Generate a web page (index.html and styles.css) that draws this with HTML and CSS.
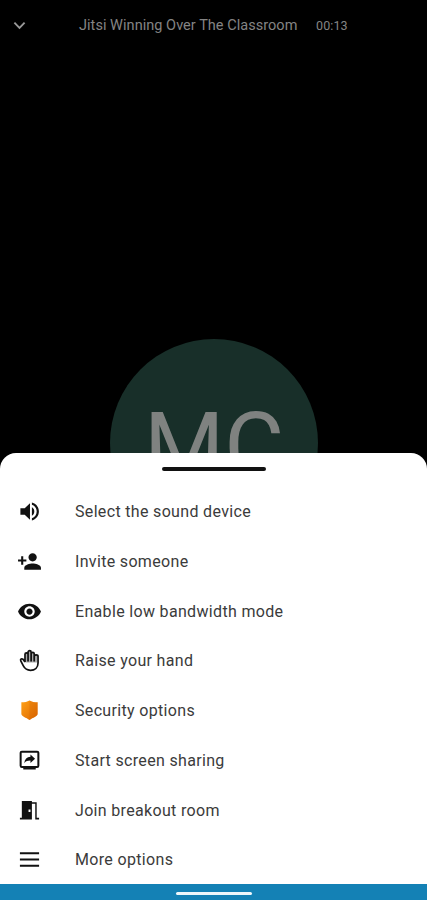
FILE: index.html
```html
<!DOCTYPE html>
<html lang="en">
<head>
<meta charset="utf-8">
<title>Jitsi Meeting</title>
<link rel="stylesheet" href="styles.css">
</head>
<body>
<main class="screen">
  <header class="topbar">
    <svg class="chevron" viewBox="0 0 14 9"><path d="M1.500 1.500 7 7l5.500-5.500"/></svg>
    <span class="title">Jitsi Winning Over The Classroom</span>
    <span class="timer">00:13</span>
  </header>
  <div class="avatar"><span>MC</span></div>
  <section class="sheet">
    <div class="handle"></div>
    <ul class="menu">
      <li><svg class="icon" viewBox="0 0 24 24"><path d="M2.500 8.500v7h4.500l5.500 5V3.500L7 8.500zM14.500 7.500v9c1.700-.8 2.500-2.500 2.500-4.500s-.8-3.700-2.500-4.500zM14.500 2.700v2.200c3 .9 5 3.700 5 7.100s-2 6.200-5 7.100v2.200c4.200-.9 7.300-4.700 7.300-9.300s-3.100-8.400-7.300-9.300z"/></svg><span>Select the sound device</span></li>
      <li><svg class="icon wide" viewBox="0 0 24 24"><path d="M15 12c2.210 0 4-1.790 4-4s-1.790-4-4-4-4 1.790-4 4 1.790 4 4 4zm-9-2V7H4v3H1v2h3v3h2v-3h3v-2H6zm9 4c-2.670 0-8 1.340-8 4v2h16v-2c0-2.660-5.330-4-8-4z"/></svg><span>Invite someone</span></li>
      <li><svg class="icon wide" viewBox="0 0 24 24"><path d="M12 4.500C7 4.500 2.730 7.610 1 12c1.730 4.390 6 7.500 11 7.500s9.270-3.110 11-7.500c-1.730-4.390-6-7.500-11-7.500zM12 17c-2.760 0-5-2.240-5-5s2.240-5 5-5 5 2.240 5 5-2.240 5-5 5zm0-8c-1.660 0-3 1.340-3 3s1.340 3 3 3 3-1.340 3-3-1.340-3-3-3z"/></svg><span>Enable low bandwidth mode</span></li>
      <li><svg class="icon hand" viewBox="0 0 24 24"><path class="fingers" d="M7.500 14V4.500q1.500-1.500 3 0V3q1.500-2 3 0v1.500q1.700-1.500 3 0V7q2-1 3.500.5V14z"/><path class="outline" d="M7.300 13.500V5.500c0-1.800 3.200-1.800 3.200 0V13M10.500 12V3.300c0-2 3.200-2 3.200 0V13M13.700 5c0-1.900 3.200-1.900 3.200 0v8M16.900 7.500c0-1.800 4-1.800 4 0V14.500c0 4.700-3.200 7.700-7.900 7.700-3.500 0-5.900-1.600-7.400-4.500L2.900 12.300c-.8-1.600 1-2.700 2.300-1.600l2.100 2.800"/></svg><span>Raise your hand</span></li>
      <li><svg class="icon" viewBox="0 0 24 24"><defs><linearGradient id="shield" x1="0" y1="0" x2="1" y2="1"><stop offset="0" stop-color="#ffa116"/><stop offset="1" stop-color="#dc6500"/></linearGradient></defs><path fill="url(#shield)" d="M12 1.500c2.300 1.400 5 1.800 8.500 2v12c0 2.800-5 4-8.500 6.500-3.500-2.500-8.500-3.700-8.500-6.500v-12c3.500-.2 6.200-.6 8.500-2z"/><path class="shade" d="M12 1.500c2.300 1.400 5 1.800 8.500 2v12c0 2.800-5 4-8.500 6.500z"/></svg><span>Security options</span></li>
      <li><svg class="icon" viewBox="0 0 24 24"><path fill-rule="evenodd" d="M4 1.700h16a2.300 2.300 0 0 1 2.300 2.300v13.500a2.300 2.300 0 0 1-2.300 2.300h-1.500v1.700h-13v-1.700H4a2.300 2.300 0 0 1-2.300-2.300V4A2.300 2.300 0 0 1 4 1.700zm-.2 2.100v13.900h16.400V3.800z"/><path d="M6.500 14.800c.5-4.200 2.700-6.500 6.500-6.700V5.700l4.800 4.400-4.800 4.500v-2.500c-2.900 0-4.900.7-6.500 2.700z"/></svg><span>Start screen sharing</span></li>
      <li><svg class="icon" viewBox="0 0 24 24"><path fill-rule="evenodd" d="M4 2H14.500v1.300h5v16.200H22v2h-4V5h-3.500v16.500H2v-2h2zm7 9v2.500h2V11z"/></svg><span>Join breakout room</span></li>
      <li><svg class="icon" viewBox="0 0 24 24"><path d="M2 4.500h20v2H2zM2 11h20v2H2zM2 17.500h20v2H2z"/></svg><span>More options</span></li>
    </ul>
    <footer class="navbar"><div class="pill"></div></footer>
  </section>
</main>
</body>
</html>
```
FILE: styles.css
```css
* { box-sizing: border-box; }
body { margin: 0; background: #000; font-family: Roboto, "Liberation Sans", sans-serif; }
.screen { position: relative; width: 427px; height: 900px; overflow: hidden; background: #000; }
.topbar { display: flex; align-items: center; height: 50px; padding-left: 13px; color: #848484; font-size: 14.500px; }
.chevron { width: 13px; height: 9px; fill: none; stroke: #999; stroke-width: 2; }
.title { width: 219px; margin-left: 53px; white-space: nowrap; letter-spacing: 0.04px; }
.timer { margin-left: 18px; font-size: 12.500px; letter-spacing: 0.1px; }
.avatar { display: flex; justify-content: center; width: 208px; height: 208px; margin: 288.500px 0 0 110px; padding-top: 4px; border-radius: 50%; background: #182f29; color: #7f8280; font-size: 92px; line-height: 208px; }
.sheet { position: absolute; left: 0; right: 0; bottom: 0; height: 447.500px; display: flex; flex-direction: column; border-radius: 16px 16px 0 0; background: #fff; overflow: hidden; }
.handle { flex: none; width: 104px; height: 4px; margin: 14.500px auto 0 162.300px; border-radius: 2px; background: #111; }
.menu { flex: none; list-style: none; margin: 15.700px 0 -1px; padding: 0; }
.menu li { display: flex; align-items: center; height: 49.770px; padding-left: 18px; color: #3b3b3b; font-size: 16px; letter-spacing: 0.33px; white-space: nowrap; }
.icon { flex: none; width: 23px; height: 23px; margin-right: 34px; fill: #111; }
.icon.wide { width: 25px; height: 25px; margin: 0 33px 0 -1px; }
.hand .fingers { fill: #aaa; }
.hand .outline { fill: none; stroke: #111; stroke-width: 1.800; stroke-linejoin: round; }
.shade { fill: #cc5a00; opacity: 0.25; }
.navbar { display: flex; flex: none; align-items: center; justify-content: center; height: 16px; padding-top: 2px; margin-top: auto; background: #1481b5; }
.pill { width: 76px; height: 3px; border-radius: 2px; background: #eef7fb; }
```
